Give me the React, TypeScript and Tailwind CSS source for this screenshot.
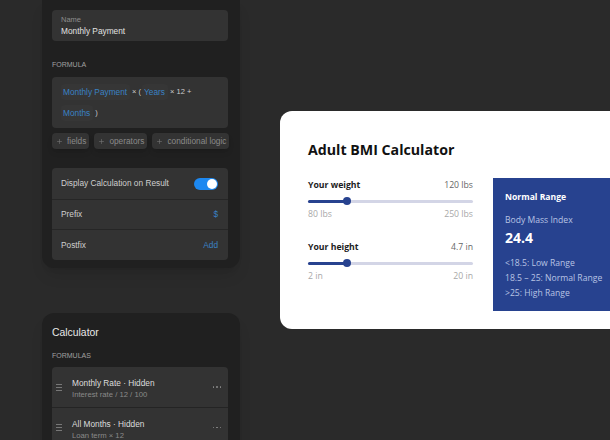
import { Plus } from 'lucide-react';

function Chip({ label }: { label: string }) {
  return (
    <div className="h-4 flex items-center gap-1 pl-1 pr-[3px] rounded-sm bg-[#333333] text-[8.3px] text-[#8a8a8a] shadow-md whitespace-nowrap">
      <Plus className="w-[7px] h-[7px] text-[#777777]" strokeWidth={2} />
      {label}
    </div>
  );
}

function Token({ label }: { label: string }) {
  return <span className="h-4 flex items-center pl-[2px] pr-[3px] rounded-sm bg-[#363636] text-[8.3px] text-[#3a82c4]">{label}</span>;
}

function Slider({ label, value, min, max }: { label: string; value: string; min: string; max: string }) {
  return (
    <div className="flex flex-col">
      <div className="flex justify-between items-center h-4 text-[8.7px]">
        <span className="font-bold text-[#1c1c1c]">{label}</span>
        <span className="text-[#666666]">{value}</span>
      </div>
      <div className="relative h-[3px] mt-[6px] rounded-full bg-[#d3d5e6]">
        <div className="h-full w-[39px] rounded-full bg-[#27428f]" />
        <div className="absolute left-[35px] top-[-3px] w-[8px] h-[8px] rounded-full bg-[#27428f]" />
      </div>
      <div className="flex justify-between items-center h-4 mt-[4px] text-[8.7px] text-[#a8a8a8]">
        <span>{min}</span>
        <span>{max}</span>
      </div>
    </div>
  );
}

function FormulaRow({ title, sub, top }: { title: string; sub: string; top?: boolean }) {
  return (
    <div className={`h-10 flex items-center pl-[4px] pr-[7px] gap-[10px] ${top ? '' : 'border-t border-[#242424]'}`}>
      <div className="flex flex-col gap-[2px] w-[6px] shrink-0">
        <div className="h-px bg-[#777777]" />
        <div className="h-px bg-[#777777]" />
        <div className="h-px bg-[#777777]" />
      </div>
      <div className="flex-1 min-w-0 pt-[3px]">
        <div className="text-[8.3px] leading-[12px] text-[#dddddd] whitespace-nowrap">{title}</div>
        <div className="text-[7.7px] leading-[11px] text-[#8a8a8a] whitespace-nowrap">{sub}</div>
      </div>
      <div className="flex gap-[2px]">
        <div className="w-[1.5px] h-[1.5px] rounded-full bg-[#8a8a8a]" />
        <div className="w-[1.5px] h-[1.5px] rounded-full bg-[#8a8a8a]" />
        <div className="w-[1.5px] h-[1.5px] rounded-full bg-[#8a8a8a]" />
      </div>
    </div>
  );
}

export default function App() {
  return (
    <div className="w-[610px] h-[440px] overflow-hidden flex bg-[#2a2a2a] font-['Liberation_Sans',sans-serif]">
      {/* Left column, builder panels */}
      <div className="w-[198px] ml-[42px] shrink-0 flex flex-col gap-[45px]">
        <div className="h-[268px] shrink-0 bg-[#202020] rounded-b-xl px-[10px] pt-[10px] shadow-lg">
          <div className="h-[31px] w-[176px] bg-[#333333] rounded-sm px-[9px] pt-[4px]">
            <div className="text-[7.5px] leading-[11px] text-[#8d8d8d]">Name</div>
            <div className="text-[8.3px] leading-[12px] text-[#e2e2e2]">Monthly Payment</div>
          </div>
          <div className="mt-[19px] text-[7px] leading-[10px] text-[#a0a0a0]">FORMULA</div>
          <div className="mt-[7px] w-[176px] h-[51px] bg-[#333333] rounded-sm px-[9px] pt-[7px]">
            <div className="flex items-center gap-px h-4 text-[7.5px] text-[#cccccc] whitespace-nowrap">
              <Token label="Monthly Payment" />
              <span className="ml-[1px]">× (</span>
              <Token label="Years" />
              <span className="ml-[1px]">× 12 +</span>
            </div>
            <div className="flex items-center gap-[2px] h-4 mt-[5px] text-[7.5px] text-[#cccccc]">
              <Token label="Months" />
              <span>)</span>
            </div>
          </div>
          <div className="mt-[5px] flex gap-[5px] w-[176px]">
            <Chip label="fields" />
            <Chip label="operators" />
            <Chip label="conditional logic" />
          </div>
          <div className="mt-[19px] w-[176px] bg-[#333333] rounded-sm text-[8.3px] text-[#cfcfcf]">
            <div className="h-[31px] flex items-center justify-between pl-[9px] pr-[10px]">
              <span>Display Calculation on Result</span>
              <div className="w-6 h-3 rounded-full bg-[#1d88f0] flex items-center justify-end pr-[1px]">
                <div className="w-[10px] h-[10px] rounded-full bg-white" />
              </div>
            </div>
            <div className="h-[30px] flex items-center justify-between pl-[9px] pr-[10px] border-t border-[#262626]">
              <span>Prefix</span>
              <span className="text-[#3a82c4]">$</span>
            </div>
            <div className="h-[31px] flex items-center justify-between pl-[9px] pr-[10px] border-t border-[#262626]">
              <span>Postfix</span>
              <span className="text-[#3a82c4]">Add</span>
            </div>
          </div>
        </div>

        <div className="h-[140px] shrink-0 bg-[#202020] rounded-t-xl px-[10px] pt-[12px] shadow-lg">
          <div className="text-[10.4px] leading-[15px] text-[#e8e8e8]">Calculator</div>
          <div className="mt-[11px] text-[7px] leading-[10px] text-[#a0a0a0]">FORMULAS</div>
          <div className="mt-[6px] w-[176px] bg-[#333333] rounded-t-sm">
            <FormulaRow title="Monthly Rate · Hidden" sub="Interest rate / 12 / 100" top />
            <FormulaRow title="All Months · Hidden" sub="Loan term × 12" />
          </div>
        </div>
      </div>

      {/* BMI calculator card */}
      <div className="ml-[40px] mt-[111px] w-[340px] h-[218px] shrink-0 bg-white rounded-l-xl flex font-['Open_Sans',sans-serif]">
        <div className="w-[213px] shrink-0 pl-[28px] pr-[20px] pt-[28px]">
          <div className="text-[14.2px] leading-[22px] font-bold text-[#111111] whitespace-nowrap">Adult BMI Calculator</div>
          <div className="mt-[17px] flex flex-col gap-[17px]">
            <Slider label="Your weight" value="120 lbs" min="80 lbs" max="250 lbs" />
            <Slider label="Your height" value="4.7 in" min="2 in" max="20 in" />
          </div>
        </div>
        <div className="w-[127px] h-[133px] mt-[67px] bg-[#27428f] pl-[12px] pt-[12px] text-[8.6px] text-[#b9c4e4] whitespace-nowrap">
          <div className="leading-[14px] font-bold text-white">Normal Range</div>
          <div className="mt-[9px] leading-[14px]">Body Mass Index</div>
          <div className="mt-[1px] text-[14px] leading-[20px] font-bold text-white">24.4</div>
          <div className="mt-[8px] leading-[15px]">&lt;18.5: Low Range</div>
          <div className="leading-[15px]">18.5 – 25: Normal Range</div>
          <div className="leading-[15px]">&gt;25: High Range</div>
        </div>
      </div>
    </div>
  );
}
